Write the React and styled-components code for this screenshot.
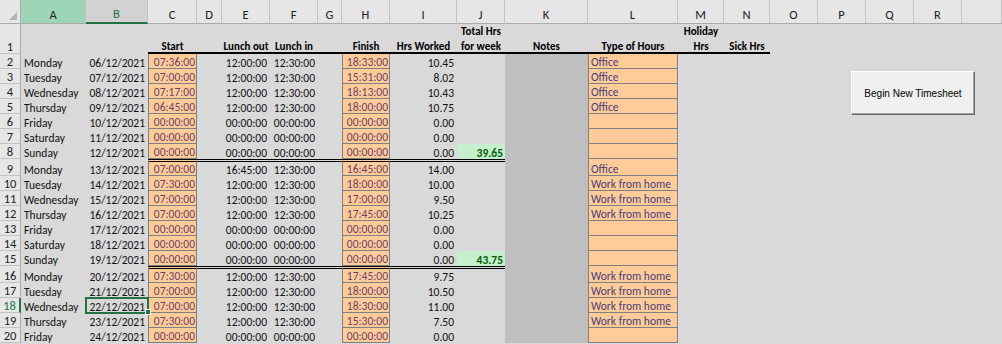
import React from 'react';
import styled, { createGlobalStyle, css } from 'styled-components';

const GlobalStyle = createGlobalStyle`
  html, body {
    margin: 0;
    padding: 0;
    background: #d9d9d9;
    overflow: hidden;
  }
`;

const LETTERS = ['A', 'B', 'C', 'D', 'E', 'F', 'G', 'H', 'I', 'J', 'K', 'L', 'M', 'N', 'O', 'P', 'Q', 'R', ''];

const Z = '00:00:00';
const WFH = 'Work from home';

const rows = [
  { n: 2, day: 'Monday', date: '06/12/2021', start: '07:36:00', out: '12:00:00', back: '12:30:00', finish: '18:33:00', hrs: '10.45', type: 'Office' },
  { n: 3, day: 'Tuesday', date: '07/12/2021', start: '07:00:00', out: '12:00:00', back: '12:30:00', finish: '15:31:00', hrs: '8.02', type: 'Office' },
  { n: 4, day: 'Wednesday', date: '08/12/2021', start: '07:17:00', out: '12:00:00', back: '12:30:00', finish: '18:13:00', hrs: '10.43', type: 'Office' },
  { n: 5, day: 'Thursday', date: '09/12/2021', start: '06:45:00', out: '12:00:00', back: '12:30:00', finish: '18:00:00', hrs: '10.75', type: 'Office' },
  { n: 6, day: 'Friday', date: '10/12/2021', start: Z, out: Z, back: Z, finish: Z, hrs: '0.00' },
  { n: 7, day: 'Saturday', date: '11/12/2021', start: Z, out: Z, back: Z, finish: Z, hrs: '0.00' },
  { n: 8, day: 'Sunday', date: '12/12/2021', start: Z, out: Z, back: Z, finish: Z, hrs: '0.00', total: '39.65' },
  { n: 9, day: 'Monday', date: '13/12/2021', start: '07:00:00', out: '16:45:00', back: '12:30:00', finish: '16:45:00', hrs: '14.00', type: 'Office', week: true },
  { n: 10, day: 'Tuesday', date: '14/12/2021', start: '07:30:00', out: '12:00:00', back: '12:30:00', finish: '18:00:00', hrs: '10.00', type: WFH },
  { n: 11, day: 'Wednesday', date: '15/12/2021', start: '07:00:00', out: '12:00:00', back: '12:30:00', finish: '17:00:00', hrs: '9.50', type: WFH },
  { n: 12, day: 'Thursday', date: '16/12/2021', start: '07:00:00', out: '12:00:00', back: '12:30:00', finish: '17:45:00', hrs: '10.25', type: WFH },
  { n: 13, day: 'Friday', date: '17/12/2021', start: Z, out: Z, back: Z, finish: Z, hrs: '0.00' },
  { n: 14, day: 'Saturday', date: '18/12/2021', start: Z, out: Z, back: Z, finish: Z, hrs: '0.00' },
  { n: 15, day: 'Sunday', date: '19/12/2021', start: Z, out: Z, back: Z, finish: Z, hrs: '0.00', total: '43.75' },
  { n: 16, day: 'Monday', date: '20/12/2021', start: '07:30:00', out: '12:00:00', back: '12:30:00', finish: '17:45:00', hrs: '9.75', type: WFH, week: true },
  { n: 17, day: 'Tuesday', date: '21/12/2021', start: '07:00:00', out: '12:00:00', back: '12:30:00', finish: '18:00:00', hrs: '10.50', type: WFH },
  { n: 18, day: 'Wednesday', date: '22/12/2021', start: '07:00:00', out: '12:00:00', back: '12:30:00', finish: '18:30:00', hrs: '11.00', type: WFH },
  { n: 19, day: 'Thursday', date: '23/12/2021', start: '07:30:00', out: '12:00:00', back: '12:30:00', finish: '15:30:00', hrs: '7.50', type: WFH },
  { n: 20, day: 'Friday', date: '24/12/2021', start: Z, out: Z, back: Z, finish: Z, hrs: '0.00' },
];

export default function App() {
  return (
    <>
      <GlobalStyle />
      <Sheet>
        <Corner>
          <svg width="8" height="8" viewBox="0 0 8 8">
            <polygon points="8,0 8,8 0,8" fill="#b4b4b4" />
          </svg>
        </Corner>
        {LETTERS.map((l, i) => (
          <ColHead key={i} $active={l === 'A'} $current={l === 'B'}>{l}</ColHead>
        ))}

        <RowHead>1</RowHead>
        <HeadCell />
        <HeadCell />
        <HeadCell $rule><span>Start</span></HeadCell>
        <HeadCell $rule />
        <HeadCell $rule><span>Lunch out</span></HeadCell>
        <HeadCell $rule><span>Lunch in</span></HeadCell>
        <HeadCell $rule />
        <HeadCell $rule><span>Finish</span></HeadCell>
        <HeadCell $rule><span>Hrs Worked</span></HeadCell>
        <HeadCell $rule><span>Total Hrs<br />for week</span></HeadCell>
        <HeadCell $rule><span>Notes</span></HeadCell>
        <HeadCell $rule><span>Type of Hours</span></HeadCell>
        <HeadCell $rule><span>Holiday<br />Hrs</span></HeadCell>
        <HeadCell $rule><span>Sick Hrs</span></HeadCell>
        <Filler $from={16} />

        {rows.map((r) => (
          <React.Fragment key={r.n}>
            <RowHead $current={r.n === 18}>{r.n}</RowHead>
            <Cell>{r.day}</Cell>
            <Cell $align="right" $selected={r.n === 18}>{r.date}</Cell>
            <Cell $align="right" $kind="input" $break={r.week}>{r.start}</Cell>
            <Cell $break={r.week} />
            <Cell $align="right" $break={r.week}>{r.out}</Cell>
            <Cell $align="right" $break={r.week}>{r.back}</Cell>
            <Cell $break={r.week} />
            <Cell $align="right" $kind="input" $break={r.week}>{r.finish}</Cell>
            <Cell $align="right" $break={r.week}>{r.hrs}</Cell>
            <Cell $align="right" $kind={r.total ? 'good' : undefined} $break={r.week}>{r.total}</Cell>
            <Cell $kind="notes" />
            <Cell $kind="input" $tone="type">{r.type}</Cell>
            <Filler $from={14} />
          </React.Fragment>
        ))}

        <MacroButton>Begin New Timesheet</MacroButton>
      </Sheet>
    </>
  );
}

const Sheet = styled.div`
  position: relative;
  display: grid;
  grid-template-columns: 21px 65px 62px 49px 25px 48px 48px 24px 48px 67px 48px 83px 90px 46px 46px 48px 48px 48px 48px 1fr;
  grid-template-rows: 24px 30px repeat(7, 15px) 17px repeat(6, 15px) 17px repeat(4, 15px) 1fr;
  width: 1002px;
  height: 344px;
  background: #d9d9d9;
  overflow: hidden;
  font-family: Calibri, Carlito, 'Liberation Sans', Arial, sans-serif;
  font-size: 11.5px;
  color: #000;
`;

const Corner = styled.div`
  display: flex;
  align-items: flex-end;
  justify-content: flex-end;
  padding: 0 3px 3px 0;
  background: #e6e6e6;
  border-right: 1px solid #ababab;
  border-bottom: 1px solid #ababab;
`;

const ColHead = styled.div`
  display: flex;
  align-items: center;
  justify-content: center;
  padding-top: 5px;
  font-size: 12.5px;
  background: ${(p) => (p.$active ? '#9fd5b7' : p.$current ? '#d2d2d2' : '#e6e6e6')};
  color: ${(p) => (p.$current ? '#217346' : '#222')};
  border-right: 1px solid #c4c4c4;
  border-bottom: ${(p) => (p.$current ? '2px solid #217346' : '1px solid #ababab')};
`;

const RowHead = styled.div`
  display: flex;
  align-items: flex-end;
  justify-content: center;
  font-size: 12.5px;
  line-height: 13px;
  background: #e6e6e6;
  color: ${(p) => (p.$current ? '#217346' : '#222')};
  border-right: ${(p) => (p.$current ? '2px solid #217346' : '1px solid #ababab')};
  border-bottom: 1px solid #c2c2c2;
`;

const HeadCell = styled.div`
  display: flex;
  align-items: flex-end;
  justify-content: center;
  text-align: center;
  white-space: nowrap;
  font-size: 11px;
  font-weight: bold;
  line-height: 15px;
  border-bottom: ${(p) => (p.$rule ? '2px solid #000' : 'none')};

  span {
    margin-bottom: -2px;
  }
`;

const Filler = styled.div`
  grid-column: ${(p) => p.$from} / -1;
`;

const Cell = styled.div`
  position: relative;
  display: flex;
  align-items: flex-end;
  justify-content: ${(p) => (p.$align === 'right' ? 'flex-end' : 'flex-start')};
  padding: 0 3px;
  white-space: nowrap;
  line-height: 12px;
  color: #111;

  ${(p) => p.$kind === 'input' && css`
    background: #ffcc99;
    color: ${p.$tone === 'type' ? '#46407a' : '#6e3e66'};
    border: 1px solid #7f7f7f;
    border-top: none;
    padding: 0 1px 0 2px;
  `}
  ${(p) => p.$kind === 'good' && css`
    background: #c6efce;
    color: #006100;
    font-weight: bold;
    padding-right: 2px;
  `}
  ${(p) => p.$kind === 'notes' && css`
    background: #bfbfbf;
  `}
  ${(p) => p.$break && css`
    border-top: 3px double #000;
  `}
  ${(p) => p.$selected && css`
    &::after {
      content: '';
      position: absolute;
      inset: -1px;
      border: 2px solid #217346;
      pointer-events: none;
      z-index: 2;
    }
    &::before {
      content: '';
      position: absolute;
      right: -3px;
      bottom: -2px;
      width: 4px;
      height: 4px;
      background: #217346;
      border: 1px solid #fff;
      z-index: 3;
    }
  `}
`;

const MacroButton = styled.button`
  position: absolute;
  left: 851px;
  top: 71px;
  width: 124px;
  height: 44px;
  padding: 0;
  background: #f0f0f0;
  border: 1px solid;
  border-color: #fff #696969 #696969 #fff;
  box-shadow: inset -1px -1px 0 #a0a0a0;
  font-family: 'Liberation Sans', Arial, sans-serif;
  font-size: 10px;
  color: #000;
`;
